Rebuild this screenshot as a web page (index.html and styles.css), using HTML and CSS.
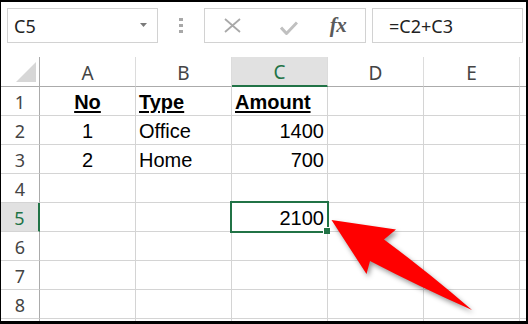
FILE: index.html
```html
<!DOCTYPE html>
<html>
<head>
<meta charset="utf-8">
<link rel="stylesheet" href="styles.css">
</head>
<body>
<div class="frame">
  <div class="toolbar">
    <div class="namebox">
      <span class="ref">C5</span>
      <svg class="caret" width="7" height="4" viewBox="0 0 7 4"><path d="M0 0H7L3.5 4Z" fill="#7a7a7a"/></svg>
    </div>
    <div class="dots">
      <svg width="4" height="15" viewBox="0 0 4 15"><rect x="0" y="0" width="4" height="3" fill="#a8a8a8"/><rect x="0" y="6" width="4" height="3" fill="#a8a8a8"/><rect x="0" y="12" width="4" height="3" fill="#a8a8a8"/></svg>
    </div>
    <div class="fxbox">
      <span class="btn"><svg width="17" height="15" viewBox="0 0 17 15"><path d="M1 1L16 14M16 1L1 14" stroke="#a9a9a9" stroke-width="1.8" fill="none"/></svg></span>
      <span class="btn btn-check"><svg width="18" height="14" viewBox="0 0 18 14"><path d="M1 6.5L6.5 12.5L17 1.5" stroke="#c0c0c0" stroke-width="3" fill="none" stroke-linejoin="round"/></svg></span>
      <span class="btn fx">fx</span>
    </div>
    <div class="formula">=C2+C3</div>
  </div>

  <div class="grid">
    <div class="hd corner"><svg width="38" height="29" viewBox="0 0 38 29"><path d="M15 25H35V5Z" fill="#d7d7d7"/></svg></div>
    <div class="hd col">A</div>
    <div class="hd col">B</div>
    <div class="hd col sel-col">C</div>
    <div class="hd col">D</div>
    <div class="hd col">E</div>
    <div class="hd col rest"></div>

    <div class="rh">1</div>
    <div class="cell c b">No</div>
    <div class="cell l b">Type</div>
    <div class="cell l b">Amount</div>
    <div class="cell"></div>
    <div class="cell"></div>
    <div class="cell rest"></div>

    <div class="rh">2</div>
    <div class="cell c">1</div>
    <div class="cell l">Office</div>
    <div class="cell r">1400</div>
    <div class="cell"></div>
    <div class="cell"></div>
    <div class="cell rest"></div>

    <div class="rh">3</div>
    <div class="cell c">2</div>
    <div class="cell l">Home</div>
    <div class="cell r">700</div>
    <div class="cell"></div>
    <div class="cell"></div>
    <div class="cell rest"></div>

    <div class="rh">4</div>
    <div class="cell"></div>
    <div class="cell"></div>
    <div class="cell"></div>
    <div class="cell"></div>
    <div class="cell"></div>
    <div class="cell rest"></div>

    <div class="rh sel-row">5</div>
    <div class="cell"></div>
    <div class="cell"></div>
    <div class="cell r active">2100<span class="outline"></span><span class="handle"></span></div>
    <div class="cell"></div>
    <div class="cell"></div>
    <div class="cell rest"></div>

    <div class="rh">6</div>
    <div class="cell"></div>
    <div class="cell"></div>
    <div class="cell"></div>
    <div class="cell"></div>
    <div class="cell"></div>
    <div class="cell rest"></div>

    <div class="rh">7</div>
    <div class="cell"></div>
    <div class="cell"></div>
    <div class="cell"></div>
    <div class="cell"></div>
    <div class="cell"></div>
    <div class="cell rest"></div>

    <div class="rh">8</div>
    <div class="cell"></div>
    <div class="cell"></div>
    <div class="cell"></div>
    <div class="cell"></div>
    <div class="cell"></div>
    <div class="cell rest"></div>

    <div class="rh"></div>
    <div class="cell"></div>
    <div class="cell"></div>
    <div class="cell"></div>
    <div class="cell"></div>
    <div class="cell"></div>
    <div class="cell rest"></div>
  </div>

  <svg class="arrow" width="528" height="324" viewBox="0 0 528 324">
    <path d="M331.5 220L396 229.5L384 239.5Q428 272 472 310Q420 287 370 261L366.5 274Z" fill="#ff0000"/>
  </svg>
</div>
</body>
</html>
```

FILE: styles.css
```css
html, body {
  margin: 0;
  padding: 0;
  background: #fff;
}

.frame {
  position: relative;
  width: 528px;
  height: 324px;
  box-sizing: border-box;
  border-style: solid;
  border-color: #000;
  border-width: 2px 2px 3px 1px;
  overflow: hidden;
  background: #fff;
}

.toolbar {
  display: flex;
  height: 35px;
  margin-top: 6px;
  padding: 0 3px 0 6px;
  font-family: "Noto Sans", "Open Sans", sans-serif;
  font-size: 18px;
  color: #222;
}

.namebox {
  width: 151px;
  box-sizing: border-box;
  border: 1px solid #d2d2d2;
  display: flex;
  align-items: center;
  justify-content: space-between;
  padding: 0 10px 0 6px;
}

.caret {
  display: block;
  margin-top: -2px;
}

.dots {
  width: 46px;
  display: flex;
  align-items: center;
  justify-content: center;
}

.dots svg {
  display: block;
  margin-top: -1px;
}

.fxbox {
  width: 162px;
  box-sizing: border-box;
  border: 1px solid #d2d2d2;
  display: grid;
  grid-template-columns: 54px 54px 1fr;
  align-items: center;
}

.btn {
  display: flex;
  justify-content: center;
  align-items: center;
}

.btn svg {
  display: block;
}

.btn-check {
  padding-left: 5px;
  padding-top: 4px;
}

.fx {
  font-family: "Liberation Serif", "DejaVu Serif", serif;
  font-style: italic;
  font-weight: bold;
  font-size: 21px;
  color: #5a5a5a;
  letter-spacing: -0.5px;
  margin-left: -2px;
  padding-bottom: 1px;
}

.formula {
  flex: 1;
  margin-left: 6px;
  box-sizing: border-box;
  border: 1px solid #d2d2d2;
  display: flex;
  align-items: center;
  padding-left: 16px;
}

.grid {
  margin-top: 14px;
  display: grid;
  grid-template-columns: 39px repeat(5, 96px) 1fr;
  grid-template-rows: 30px;
  grid-auto-rows: 29px;
}

.grid > div {
  box-sizing: border-box;
  border-right: 1px solid #d4d4d4;
  border-bottom: 1px solid #d4d4d4;
  display: flex;
  align-items: flex-end;
  padding-bottom: 1px;
  line-height: 24px;
  white-space: nowrap;
}

.hd, .rh {
  font-family: "Noto Sans", "Open Sans", sans-serif;
  font-size: 18px;
  color: #444;
  justify-content: center;
}

.grid > .hd {
  border-bottom-color: #ababab;
  border-right-color: #dcdcdc;
}

.grid > .col {
  font-size: 19px;
}

.grid > .corner {
  border-right-color: #ababab;
  padding: 0;
  align-items: stretch;
}

.corner svg {
  display: block;
}

.grid > .sel-col {
  background: #e1e1e1;
  border-bottom: 2px solid #217346;
  color: #217346;
  padding-bottom: 1px;
}

.grid > .rest {
  border-right: none;
}

.grid > .rh {
  border-right-color: #ababab;
}

.grid > .sel-row {
  background: #e1e1e1;
  border-right: 2px solid #217346;
  color: #217346;
}

.cell {
  font-family: "Liberation Sans", Arial, sans-serif;
  font-size: 20px;
  color: #000;
}

.cell.l {
  justify-content: flex-start;
  padding-left: 3px;
}

.cell.r {
  justify-content: flex-end;
  padding-right: 3px;
}

.cell.c {
  justify-content: center;
}

.cell.b {
  font-weight: bold;
  text-decoration: underline;
  text-decoration-thickness: 2px;
  text-underline-offset: 2px;
}

.active {
  position: relative;
}

.outline {
  position: absolute;
  left: -2px;
  top: -2px;
  right: -2px;
  bottom: -2px;
  border: 2px solid #217346;
}

.handle {
  position: absolute;
  right: -3px;
  bottom: -3px;
  width: 6px;
  height: 6px;
  background: #217346;
  border: 1px solid #fff;
  border-right: none;
  border-bottom: none;
}

.arrow {
  position: absolute;
  left: -1px;
  top: -2px;
  filter: drop-shadow(2px 3px 2.5px rgba(0, 0, 0, 0.4));
  pointer-events: none;
}
```
